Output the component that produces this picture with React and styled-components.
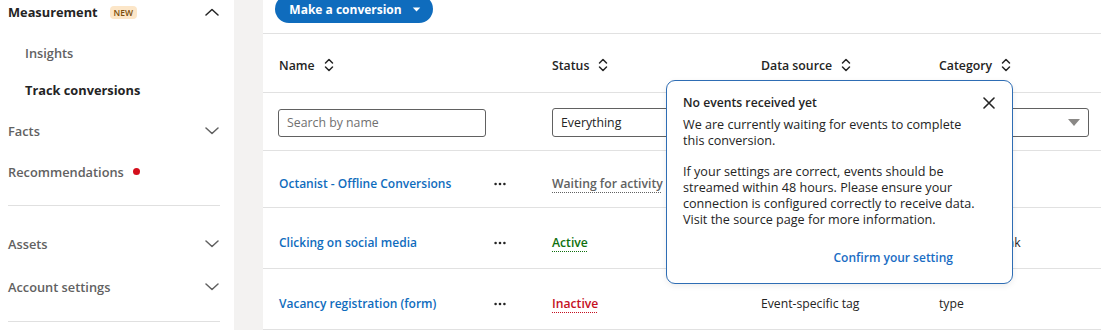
import React from "react";
import styled, { createGlobalStyle } from "styled-components";

const GlobalStyle = createGlobalStyle`
  html, body {
    margin: 0;
    padding: 0;
    background: #ffffff;
    overflow: hidden;
  }
  body {
    font-family: "Open Sans", "Noto Sans", sans-serif;
    color: #242424;
  }
`;

const Chevron = ({ up }) => (
  <svg width="14" height="8" viewBox="0 0 14 8" fill="none">
    <path
      d={up ? "M1 7L7 1.5L13 7" : "M1 1L7 6.5L13 1"}
      stroke={up ? "#242424" : "#616161"}
      strokeWidth="1.5"
      strokeLinecap="round"
      strokeLinejoin="round"
    />
  </svg>
);

const SortIcon = () => (
  <svg width="10" height="14" viewBox="0 0 10 14" fill="none">
    <path
      d="M1.5 5L5 1.5L8.5 5M1.5 9L5 12.5L8.5 9"
      stroke="#242424"
      strokeWidth="1.5"
      strokeLinecap="round"
      strokeLinejoin="round"
    />
  </svg>
);

const CloseIcon = () => (
  <svg width="12" height="12" viewBox="0 0 12 12" fill="none">
    <path d="M1 1L11 11M11 1L1 11" stroke="#242424" strokeWidth="1.6" strokeLinecap="round" />
  </svg>
);

const MoreIcon = () => (
  <svg width="12" height="4" viewBox="0 0 12 4">
    <circle cx="1.6" cy="2" r="1.3" fill="#242424" />
    <circle cx="6" cy="2" r="1.3" fill="#242424" />
    <circle cx="10.4" cy="2" r="1.3" fill="#242424" />
  </svg>
);

// cells that sit under the popover are left empty
const rows = [
  { name: "Octanist - Offline Conversions", status: "Waiting for activity", tone: "wait", source: "", category: "", h: 58 },
  { name: "Clicking on social media", status: "Active", tone: "active", source: "", category: "Outbound link", h: 62 },
  { name: "Vacancy registration (form)", status: "Inactive", tone: "inactive", source: "Event-specific tag", category: "type", h: 62 }
];

const App = () => {
  return (
    <>
      <GlobalStyle />
      <Page>
        <Sidebar>
          <NavRow h={24}>
            <NavLabel strong>
              Measurement <Badge>NEW</Badge>
            </NavLabel>
            <Chevron up />
          </NavRow>
          <SubRow mt={10}>
            <SubLabel>Insights</SubLabel>
          </SubRow>
          <SubRow>
            <SubLabel active>Track conversions</SubLabel>
          </SubRow>
          <NavRow h={41} mt={2}>
            <NavLabel>Facts</NavLabel>
            <Chevron />
          </NavRow>
          <NavRow h={41}>
            <NavLabel>
              Recommendations <Dot />
            </NavLabel>
          </NavRow>
          <Separator mt={13} />
          <NavRow h={43} mt={16}>
            <NavLabel>Assets</NavLabel>
            <Chevron />
          </NavRow>
          <NavRow h={43}>
            <NavLabel>Account settings</NavLabel>
            <Chevron />
          </NavRow>
          <Separator mt={13} />
        </Sidebar>
        <Gutter />
        <Main>
          <Toolbar>
            <PrimaryButton>
              Make a conversion
              <svg width="9" height="5" viewBox="0 0 10 6">
                <path d="M0.5 0.5H9.5L5 5.5Z" fill="#ffffff" />
              </svg>
            </PrimaryButton>
          </Toolbar>

          <HeaderRow>
            <HeadCell>
              Name <SortIcon />
            </HeadCell>
            <HeadCell>
              Status <SortIcon />
            </HeadCell>
            <HeadCell>
              Data source <SortIcon />
            </HeadCell>
            <HeadCell>
              Category <SortIcon />
            </HeadCell>
          </HeaderRow>

          <FilterRow>
            <Cell>
              <SearchInput placeholder="Search by name" />
            </Cell>
            <Cell>
              <SelectBox w={190}>Everything</SelectBox>
            </Cell>
            <Cell>
              <SelectBox w={160} />
            </Cell>
            <Cell>
              <SelectBox w={150}>
                <span />
                <svg width="12" height="7" viewBox="0 0 12 7">
                  <path d="M0 0H12L6 7Z" fill="#8a8886" />
                </svg>
              </SelectBox>
            </Cell>
          </FilterRow>

          {rows.map(r => (
            <DataRow key={r.name} h={r.h}>
              <NameCell>
                <NameLink>{r.name}</NameLink>
                <MoreIcon />
              </NameCell>
              <Cell>
                <Status tone={r.tone}>{r.status}</Status>
              </Cell>
              <Cell>
                <Plain>{r.source}</Plain>
              </Cell>
              <Cell>
                <Plain>{r.category}</Plain>
              </Cell>
            </DataRow>
          ))}

          <Popover>
            <PopHead>
              <PopTitle>No events received yet</PopTitle>
              <CloseButton>
                <CloseIcon />
              </CloseButton>
            </PopHead>
            <PopText>
              We are currently waiting for events to complete
              <br />
              this conversion.
            </PopText>
            <PopText>
              If your settings are correct, events should be
              <br />
              streamed within 48 hours. Please ensure your
              <br />
              connection is configured correctly to receive data.
              <br />
              Visit the source page for more information.
            </PopText>
            <PopFooter>
              <PopLink>Confirm your setting</PopLink>
            </PopFooter>
          </Popover>
        </Main>
      </Page>
    </>
  );
};

// Styled components
const Page = styled.div`
  display: flex;
  width: 1101px;
  height: 330px;
  overflow: hidden;
`;

const Sidebar = styled.nav`
  width: 234px;
  flex-shrink: 0;
  display: flex;
  flex-direction: column;
  background: #ffffff;
`;

const NavRow = styled.div`
  height: ${p => p.h}px;
  margin-top: ${p => p.mt || 0}px;
  padding: 0 15px 0 8px;
  display: flex;
  align-items: center;
  justify-content: space-between;
`;

const NavLabel = styled.span`
  display: flex;
  align-items: center;
  gap: 9px;
  font-size: 12.8px;
  font-weight: ${p => (p.strong ? 700 : 600)};
  color: ${p => (p.strong ? "#242424" : "#616161")};
`;

const Badge = styled.span`
  display: inline-flex;
  align-items: center;
  height: 13px;
  padding: 0 4px;
  margin-left: 3px;
  border-radius: 4px;
  background: #fce6c8;
  color: #7a4d0b;
  font-size: 8.5px;
  font-weight: 600;
`;

const Dot = styled.span`
  width: 7px;
  height: 7px;
  border-radius: 50%;
  background: #d40f1c;
`;

const SubRow = styled.div`
  height: 37px;
  margin-top: ${p => p.mt || 0}px;
  padding-left: 25px;
  display: flex;
  align-items: center;
`;

const SubLabel = styled.span`
  font-size: 12.8px;
  font-weight: ${p => (p.active ? 700 : 600)};
  color: ${p => (p.active ? "#242424" : "#616161")};
`;

const Separator = styled.hr`
  margin: ${p => p.mt}px 14px 0 8px;
  border: none;
  border-top: 1px solid #e0e0e0;
`;

const Gutter = styled.div`
  width: 29px;
  flex-shrink: 0;
  background: #f3f2f1;
`;

const Main = styled.main`
  position: relative;
  flex: 1;
  display: flex;
  flex-direction: column;
`;

const Toolbar = styled.div`
  height: 34px;
  padding-left: 12px;
  border-bottom: 1px solid #e1e1e1;
  display: flex;
`;

const PrimaryButton = styled.button`
  margin-top: -5px;
  height: 28px;
  width: 158px;
  border: none;
  border-radius: 15px;
  background: #0f6cbd;
  color: #ffffff;
  font-family: inherit;
  font-size: 12px;
  font-weight: 700;
  display: flex;
  align-items: center;
  justify-content: center;
  gap: 10px;
  padding: 0 0 0 2px;
`;

const tableColumns = "273px 209px 178px 1fr";

const HeaderRow = styled.div`
  box-sizing: border-box;
  display: grid;
  grid-template-columns: ${tableColumns};
  height: 60px;
  padding: 4px 0 0 16px;
  border-bottom: 1px solid #e1e1e1;
`;

const HeadCell = styled.div`
  display: flex;
  align-items: center;
  gap: 9px;
  font-size: 12.3px;
  font-weight: 600;
  color: #242424;
`;

const FilterRow = styled(HeaderRow)`
  height: 59px;
  padding-top: 2px;
`;

const DataRow = styled(HeaderRow)`
  height: ${p => p.h}px;
  padding-top: 9px;
`;

const Cell = styled.div`
  display: flex;
  align-items: center;
  min-width: 0;
`;

const NameCell = styled(Cell)`
  justify-content: space-between;
  padding-right: 46px;
`;

const SearchInput = styled.input`
  box-sizing: border-box;
  width: 208px;
  height: 28px;
  margin-left: -1px;
  padding: 0 8px;
  border: 1px solid #616161;
  border-radius: 3px;
  font-family: inherit;
  font-size: 12.3px;
  color: #242424;
  outline: none;

  &::placeholder {
    color: #707070;
  }
`;

const SelectBox = styled.div`
  box-sizing: border-box;
  width: ${p => p.w}px;
  height: 29px;
  padding: 0 8px;
  border: 1px solid #616161;
  border-radius: 3px;
  display: flex;
  align-items: center;
  justify-content: space-between;
  font-size: 12.3px;
  color: #242424;
`;

const NameLink = styled.a`
  font-size: 12px;
  font-weight: 600;
  color: #0f6cbd;
  white-space: nowrap;
`;

const statusColors = {
  wait: "#616161",
  active: "#0e700e",
  inactive: "#c50f1f"
};

const Status = styled.span`
  font-size: 12.2px;
  font-weight: 600;
  color: ${p => statusColors[p.tone]};
  text-decoration: underline dotted ${p => statusColors[p.tone]};
  text-underline-offset: 4px;
  white-space: nowrap;
`;

const Plain = styled.span`
  font-size: 12.2px;
  color: #242424;
  white-space: nowrap;
`;

const Popover = styled.div`
  position: absolute;
  left: 403px;
  top: 80px;
  box-sizing: border-box;
  width: 347px;
  height: 204px;
  padding: 12px 17px 0 16px;
  background: #ffffff;
  border: 1px solid #2e6db4;
  border-radius: 9px;
  box-shadow: 0 2px 6px rgba(0, 0, 0, 0.08);
`;

const PopHead = styled.div`
  display: flex;
  align-items: center;
  justify-content: space-between;
  height: 18px;
`;

const PopTitle = styled.div`
  font-size: 12.2px;
  font-weight: 600;
  color: #242424;
`;

const CloseButton = styled.span`
  display: flex;
  margin-top: 2px;
`;

const PopText = styled.p`
  margin: 6px 0 0;
  font-size: 12.6px;
  line-height: 15.7px;
  color: #242424;

  & + & {
    margin-top: 16px;
  }
`;

const PopFooter = styled.div`
  display: flex;
  justify-content: flex-end;
  margin-top: 22px;
  padding-right: 42px;
`;

const PopLink = styled.a`
  font-size: 12px;
  font-weight: 600;
  color: #1a6dc4;
`;

export default App;
